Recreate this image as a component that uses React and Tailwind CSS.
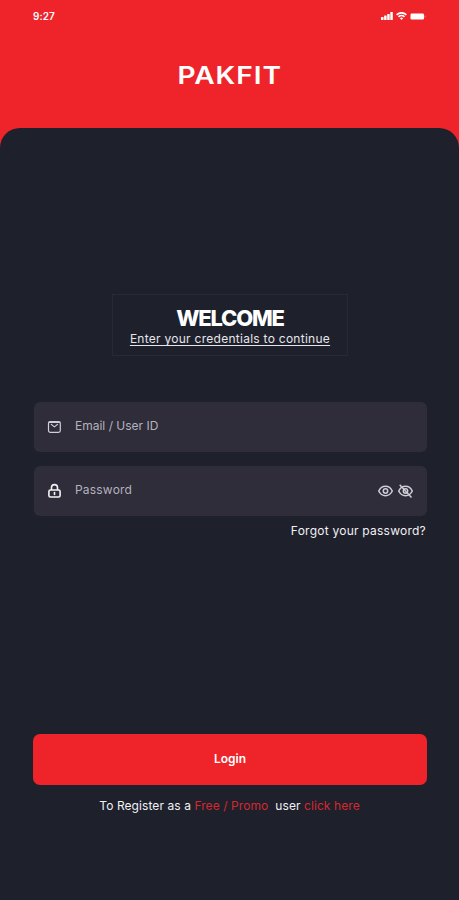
import React, { useState } from 'react';

function StatusBar() {
    return (
        <div className="flex h-8 items-center justify-between pl-[33px] pr-[33px] text-white">
            <span className="text-[10px] font-semibold leading-none tracking-[0.1px]">9:27</span>
            <div className="flex items-center gap-[3px]">
                <svg width="12" height="8" viewBox="0 0 12 8" fill="currentColor">
                    <rect x="0" y="5" width="2.5" height="3" rx="0.5" />
                    <rect x="3.1" y="3.6" width="2.5" height="4.4" rx="0.5" />
                    <rect x="6.2" y="2" width="2.5" height="6" rx="0.5" />
                    <rect x="9.3" y="0" width="2.5" height="8" rx="0.5" />
                </svg>
                <svg width="11" height="8" viewBox="0 0 11 8" fill="none" stroke="currentColor" strokeWidth="1.7">
                    <path d="M0.6 2.8a7 7 0 0 1 9.8 0" />
                    <path d="M2.5 4.8a4.3 4.3 0 0 1 6 0" />
                    <path d="M5.5 8 3.9 6.2a2.4 2.4 0 0 1 3.2 0Z" fill="currentColor" stroke="none" />
                </svg>
                <svg width="16" height="7" viewBox="0 0 16 7" fill="currentColor">
                    <rect x="0.5" y="0.5" width="13.5" height="6" rx="1.2" />
                    <path d="M14.6 2.3v2.4c.6-.2 1-.6 1-1.2s-.4-1-1-1.2Z" opacity="0.5" />
                </svg>
            </div>
        </div>
    );
}

function MailIcon() {
    return (
        <svg width="15" height="14" viewBox="0 0 15 14" fill="none" stroke="#d0cfd7" strokeWidth="1.2" strokeLinecap="round" strokeLinejoin="round">
            <rect x="1.5" y="1.7" width="11.8" height="10.6" rx="1.8" />
            <path d="M2 2.4h10.8" />
            <path d="m4.3 4.4 3.1 2.5 3.1-2.5" />
        </svg>
    );
}

function LockIcon() {
    return (
        <svg width="15" height="16" viewBox="0 0 15 16" fill="none" stroke="#f4f4f6" strokeWidth="1.6" strokeLinejoin="round">
            <rect x="1.9" y="7" width="11.2" height="7" rx="1.6" />
            <path d="M4.5 7V4.6a3 3 0 0 1 6 0V7" />
            <path d="M7.5 9.6v1.9" strokeLinecap="round" />
        </svg>
    );
}

function EyeIcon() {
    return (
        <svg width="15" height="14" viewBox="0.5 0 15 14" fill="none" stroke="#cfced6" strokeWidth="1.5">
            <path d="M1.2 7c1.4-3 3.8-4.7 6.8-4.7S13.4 4 14.8 7c-1.4 3-3.8 4.7-6.8 4.7S2.6 10 1.2 7Z" />
            <circle cx="8" cy="7" r="2.2" />
        </svg>
    );
}

function EyeOffIcon() {
    return (
        <svg width="15" height="14" viewBox="0.5 0 15 14" fill="none" stroke="#cfced6" strokeWidth="1.5">
            <path d="M1.2 7c1.4-3 3.8-4.7 6.8-4.7S13.4 4 14.8 7c-1.4 3-3.8 4.7-6.8 4.7S2.6 10 1.2 7Z" />
            <circle cx="8" cy="7" r="2.2" />
            <path d="m2.2.8 11.8 12.6" />
        </svg>
    );
}

export default function App() {
    const [email, setEmail] = useState('');
    const [password, setPassword] = useState('');
    const [visible, setVisible] = useState(false);

    return (
        <div className="flex h-[900px] w-full flex-col overflow-hidden bg-[#ee242a] font-['Inter',sans-serif]">
            <header className="h-32 shrink-0">
                <StatusBar />
                <div className="flex justify-center pt-[29px]">
                    <span className="scale-x-[1.17] text-[24px] font-semibold leading-[30px] tracking-[0.8px] text-white">PAKFIT</span>
                </div>
            </header>

            <main className="flex flex-1 flex-col rounded-t-[20px] bg-[#1e202b] pl-[33px] pr-8">
                <div className="mt-[166px] flex h-[62px] w-[236px] flex-col items-center self-center border border-[#272934] pt-[11px] text-white">
                    <h1 className="whitespace-nowrap text-[22px] font-extrabold leading-[25px] tracking-[-1.2px]">WELCOME</h1>
                    <p className="whitespace-nowrap text-[12px] leading-[16px] tracking-[0.27px] text-[#e6e6ea] underline underline-offset-2">Enter your credentials to continue</p>
                </div>

                <form className="mt-[46px] flex flex-1 flex-col" onSubmit={(e) => e.preventDefault()}>
                    <div className="ml-px flex h-[50px] items-center rounded-[6px] bg-[#2e2d39] pl-[13px] pr-3">
                        <MailIcon />
                        <input
                            type="text"
                            value={email}
                            onChange={(e) => setEmail(e.target.value)}
                            className="ml-[13px] min-w-0 flex-1 bg-transparent pb-[2px] text-[12px] text-white outline-none placeholder:text-[#b3b2bd]"
                            placeholder="Email / User ID"
                        />
                    </div>
                    <div className="ml-px mt-[14px] flex h-[50px] items-center rounded-[6px] bg-[#2e2d39] pl-[13px] pr-[14px]">
                        <LockIcon />
                        <input
                            type={visible ? 'text' : 'password'}
                            value={password}
                            onChange={(e) => setPassword(e.target.value)}
                            className="ml-[13px] min-w-0 flex-1 bg-transparent pb-[2px] text-[12px] tracking-[0.2px] text-white outline-none placeholder:text-[#b3b2bd]"
                            placeholder="Password"
                        />
                        <div className="flex items-center gap-[5px]">
                            <button type="button" onClick={() => setVisible(true)}><EyeIcon /></button>
                            <button type="button" onClick={() => setVisible(false)}><EyeOffIcon /></button>
                        </div>
                    </div>
                    <a href="#" className="mr-px mt-[6px] self-end whitespace-nowrap text-[12px] leading-[18px] tracking-[0.24px] text-[#f1f1f4]">Forgot your password?</a>

                    <button type="submit" className="mt-[194px] h-[51px] w-full rounded-[7px] bg-[#ee242a] pb-[2px] text-[12px] font-semibold text-white">
                        Login
                    </button>
                    <p className="mr-px mt-[12px] whitespace-pre text-center text-[12px] leading-[18px] tracking-[0.08px] text-[#f1f1f4]">
                        To Register as a <a href="#" className="text-[#d5282f]">Free / Promo</a>{'  '}user <a href="#" className="text-[#d5282f]">click here</a>
                    </p>
                </form>
            </main>
        </div>
    );
}
